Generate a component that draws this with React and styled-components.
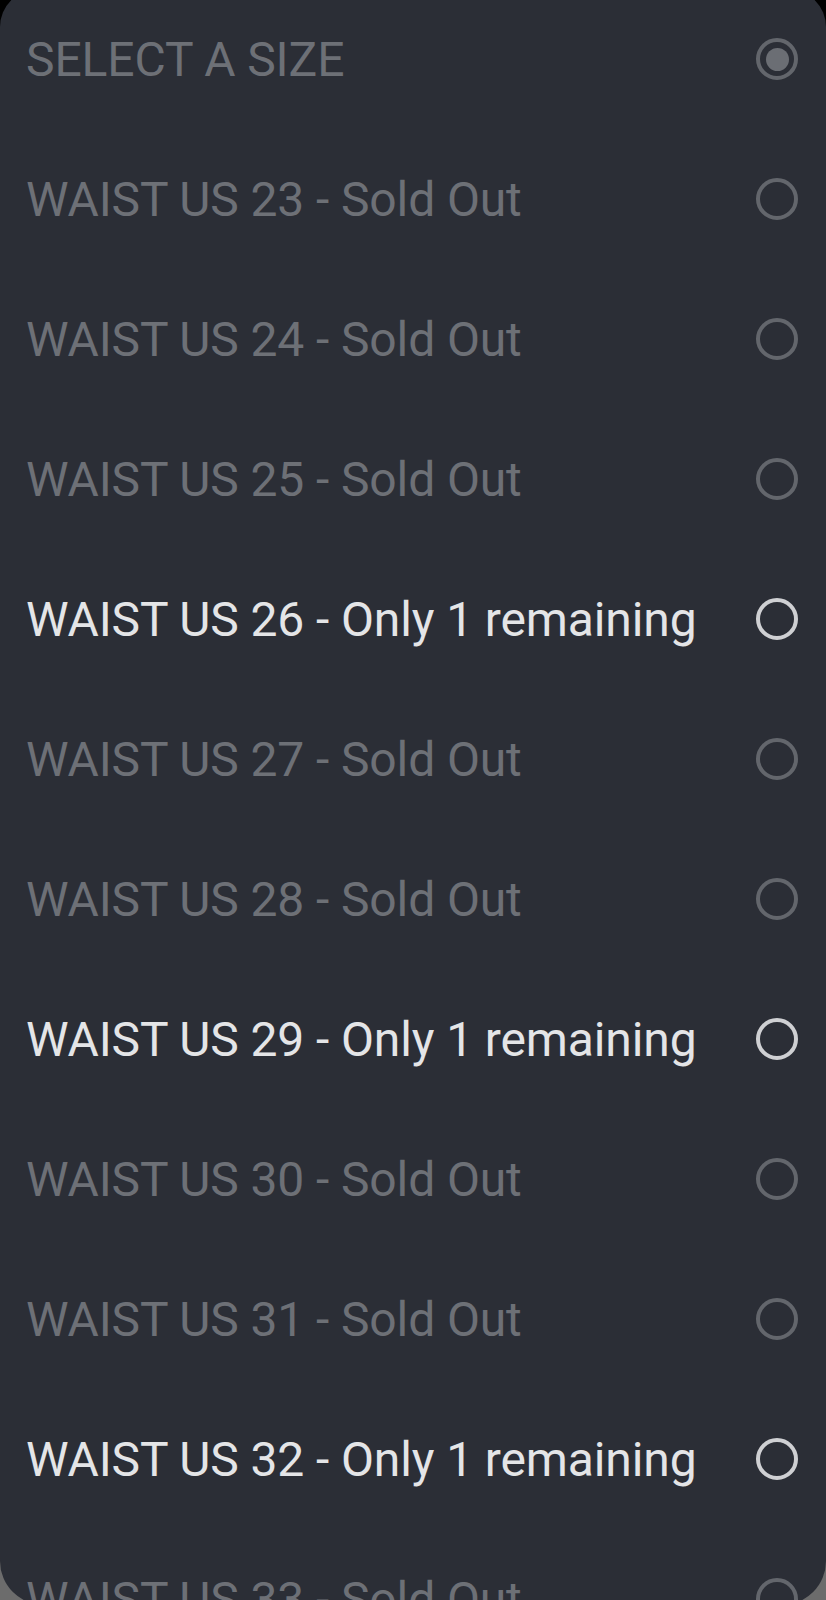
import React from "react";
import styled, { createGlobalStyle } from "styled-components";

const Global = createGlobalStyle`
  html, body { margin: 0; padding: 0; background: #000; }
  body { overflow: hidden; }
`;

const Screen = styled.div`
  width: 826px;
  height: 1600px;
  overflow: hidden;
  background: linear-gradient(to bottom, #000 0%, #000 50%, #6c6c6c 50%, #6c6c6c 100%);
`;

const Sheet = styled.div`
  margin-top: -11px;
  height: 1616px;
  background: #2b2e36;
  border-radius: 38px 38px 44px 44px;
  overflow: hidden;
  display: flex;
  flex-direction: column;
`;

const Option = styled.div`
  flex: 0 0 140px;
  height: 140px;
  display: flex;
  align-items: center;
  justify-content: space-between;
  padding: 0 28px 0 26px;
  box-sizing: border-box;
`;

const Label = styled.span`
  font-family: Roboto, "Noto Sans", sans-serif;
  font-size: 48px;
  letter-spacing: -0.12px;
  color: ${(p) => (p.$available ? "#e4e5e7" : "#6d7076")};
  white-space: nowrap;
`;

const Radio = styled.span`
  width: 42px;
  height: 42px;
  box-sizing: border-box;
  border-radius: 50%;
  border: 4.5px solid ${(p) => (p.$available ? "#cfd0d3" : "#63666c")};
  display: flex;
  align-items: center;
  justify-content: center;
  flex: 0 0 auto;
`;

const Dot = styled.span`
  width: 23px;
  height: 23px;
  border-radius: 50%;
  background: #6b6e74;
`;

const sizes = [23, 24, 25, 26, 27, 28, 29, 30, 31, 32, 33];
const available = new Set([26, 29, 32]);

export default function App() {
  return (
    <>
      <Global />
      <Screen>
        <Sheet>
          <Option>
            <Label>SELECT A SIZE</Label>
            <Radio>
              <Dot />
            </Radio>
          </Option>
          {sizes.map((s) => {
            const ok = available.has(s);
            return (
              <Option key={s}>
                <Label $available={ok}>
                  WAIST US {s} - {ok ? "Only 1 remaining" : "Sold Out"}
                </Label>
                <Radio $available={ok} />
              </Option>
            );
          })}
        </Sheet>
      </Screen>
    </>
  );
}
